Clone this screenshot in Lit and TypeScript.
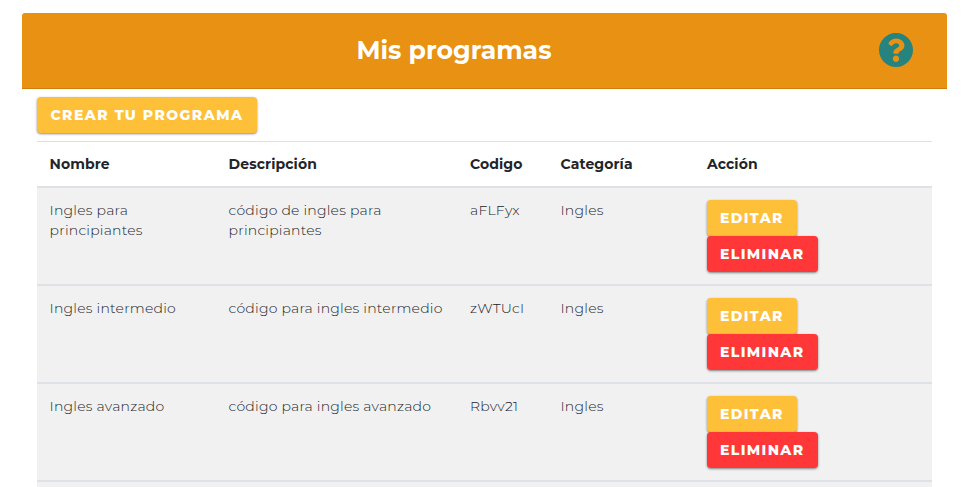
import { LitElement, html, css } from "lit";
import { customElement } from "lit/decorators.js";

interface Programa {
  nombre: string[];
  descripcion: string[];
  codigo: string;
  categoria: string;
}

const programas: Programa[] = [
  {
    nombre: ["Ingles para", "principiantes"],
    descripcion: ["código de ingles para", "principiantes"],
    codigo: "aFLFyx",
    categoria: "Ingles",
  },
  {
    nombre: ["Ingles intermedio"],
    descripcion: ["código para ingles intermedio"],
    codigo: "zWTUcI",
    categoria: "Ingles",
  },
  {
    nombre: ["Ingles avanzado"],
    descripcion: ["código para ingles avanzado"],
    codigo: "Rbvv21",
    categoria: "Ingles",
  },
];

@customElement("app-root")
export class AppRoot extends LitElement {
  static styles = css`
    :host {
      display: block;
      box-sizing: border-box;
      height: 487px;
      overflow: hidden;
      padding: 13px 18px 0 22px;
      background: #fff;
      color: #212529;
      font-family: Montserrat, Inter, sans-serif;
      font-size: 14px;
      line-height: 20px;
    }
    .header {
      display: flex;
      align-items: center;
      box-sizing: border-box;
      height: 76px;
      padding: 0 34px 1px 0;
      background: #e89112;
      border-bottom: 1px solid #d07d0c;
      border-radius: 3px 3px 0 0;
    }
    h1 {
      flex: 1;
      margin: 0;
      padding-left: 7px;
      text-align: center;
      color: #fff;
      font-size: 25.2px;
      font-weight: 700;
      line-height: 30px;
    }
    .help {
      display: block;
      width: 34px;
      height: 34px;
    }
    .body {
      padding: 8px 15px 0;
    }
    .btn {
      display: block;
      box-sizing: border-box;
      height: 36px;
      margin: 0;
      padding: 0 0 0 13px;
      border: 0;
      border-radius: 4px;
      background: #ffc039;
      color: #fff;
      font: 800 14px/36px Montserrat, Inter, sans-serif;
      letter-spacing: 1.38px;
      text-align: left;
      white-space: nowrap;
      box-shadow: 0 1px 3px rgba(0, 0, 0, 0.2), 0 1px 2px rgba(0, 0, 0, 0.3);
    }
    .crear {
      width: 220px;
      padding-left: 13.4px;
      letter-spacing: 1.47px;
    }
    .editar {
      width: 90px;
    }
    .eliminar {
      position: relative;
      width: 111px;
      background: #ff3739;
    }
    .table {
      margin-top: 8px;
      border-top: 1px solid #dee2e6;
    }
    .row {
      display: grid;
      grid-template-columns: 179px 241px 90.5px 146.5px 1fr;
      box-sizing: border-box;
      height: 98px;
      padding-top: 12px;
      background: #f1f1f1;
      border-bottom: 2px solid #dee2e6;
    }
    .row > div {
      padding-left: 12.6px;
      white-space: nowrap;
      font-weight: 300;
      letter-spacing: 0.22px;
    }
    .row > div:nth-child(n + 3) {
      padding-left: 13px;
    }
    .row.head {
      height: 46px;
      background: #fff;
    }
    .row.head > div {
      font-weight: 700;
      letter-spacing: 0.1px;
    }
  `;

  render() {
    return html`
      <div class="header">
        <h1>Mis programas</h1>
        <svg class="help" viewBox="8 8 496 496" role="img" aria-label="Ayuda">
          <path
            fill="#26837e"
            d="M504 256c0 136.997-111.043 248-248 248S8 392.997 8 256C8 119.083 119.043 8 256 8s248 111.083 248 248zM262.655 90c-54.497 0-89.255 22.957-116.549 63.758-3.536 5.286-2.353 12.415 2.715 16.258l34.699 26.31c5.205 3.947 12.621 3.008 16.665-2.122 17.864-22.658 30.113-35.797 57.303-35.797 20.429 0 45.698 13.148 45.698 32.958 0 14.976-12.363 22.667-32.534 33.976C247.128 238.528 216 254.941 216 296v4c0 6.627 5.373 12 12 12h56c6.627 0 12-5.373 12-12v-1.333c0-28.462 83.186-29.647 83.186-106.667 0-58.002-60.165-102-116.531-102zM256 338c-25.365 0-46 20.635-46 46 0 25.364 20.635 46 46 46s46-20.636 46-46c0-25.365-20.635-46-46-46z"
          />
        </svg>
      </div>
      <div class="body">
        <button class="btn crear">CREAR TU PROGRAMA</button>
        <div class="table">
          <div class="row head">
            <div>Nombre</div>
            <div>Descripción</div>
            <div>Codigo</div>
            <div>Categoría</div>
            <div>Acción</div>
          </div>
          ${programas.map(
            (p) => html`
              <div class="row">
                <div>${p.nombre.map((l) => html`<span>${l}</span><br />`)}</div>
                <div>${p.descripcion.map((l) => html`<span>${l}</span><br />`)}</div>
                <div>${p.codigo}</div>
                <div>${p.categoria}</div>
                <div>
                  <button class="btn editar">EDITAR</button>
                  <button class="btn eliminar">ELIMINAR</button>
                </div>
              </div>
            `
          )}
          <div class="row"></div>
        </div>
      </div>
    `;
  }
}
